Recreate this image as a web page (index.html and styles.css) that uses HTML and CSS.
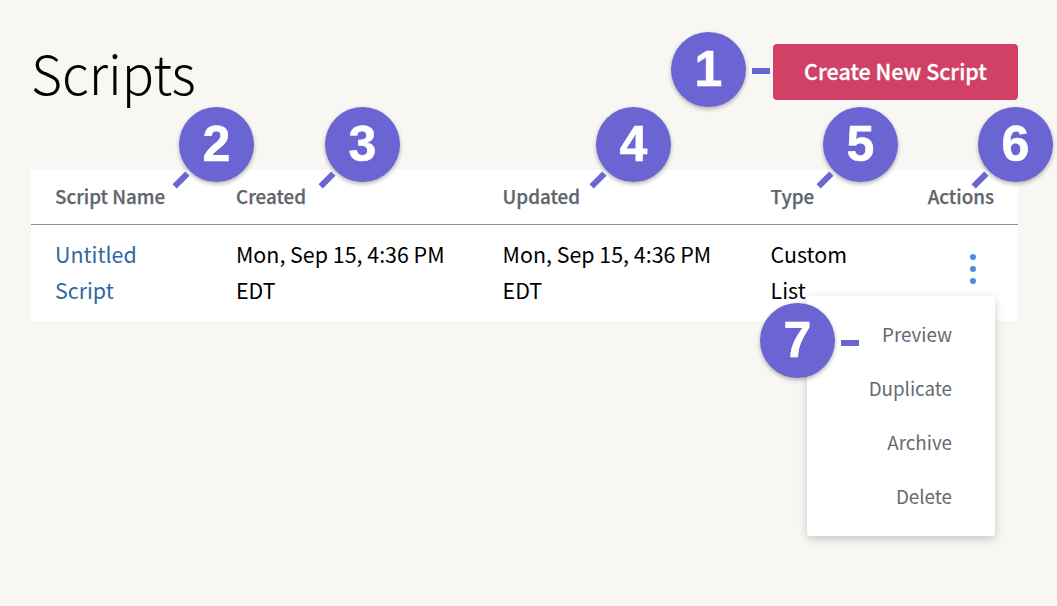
FILE: index.html
```html
<!DOCTYPE html>
<html>
<head>
    <meta charset="utf-8">
    <title>Scripts</title>
    <link rel="stylesheet" href="styles.css">
</head>
<body>
<div class="page">
    <div class="page_head">
        <h1 class="page_title">Scripts</h1>
        <button class="create_btn">Create New Script</button>
    </div>

    <table class="scripts">
        <colgroup>
            <col class="col_name">
            <col class="col_created">
            <col class="col_updated">
            <col class="col_type">
            <col>
        </colgroup>
        <thead>
            <tr>
                <th>Script Name</th>
                <th>Created</th>
                <th>Updated</th>
                <th>Type</th>
                <th class="right">Actions</th>
            </tr>
        </thead>
        <tbody>
            <tr>
                <td><a class="script_link" href="#">Untitled Script</a></td>
                <td>Mon, Sep 15, 4:36 PM EDT</td>
                <td>Mon, Sep 15, 4:36 PM EDT</td>
                <td>Custom List</td>
                <td class="right">
                    <svg class="kebab" width="6" height="30" viewBox="0 0 6 30"><circle cx="3" cy="3" r="3"/><circle cx="3" cy="15" r="3"/><circle cx="3" cy="27" r="3"/></svg>
                </td>
            </tr>
        </tbody>
    </table>
</div>

<div class="menu">
    <a href="#">Preview</a>
    <a href="#">Duplicate</a>
    <a href="#">Archive</a>
    <a href="#">Delete</a>
</div>

<!-- numbered callouts drawn over the page -->
<div class="badge b1">1</div>
<div class="badge b2">2</div>
<div class="badge b3">3</div>
<div class="badge b4">4</div>
<div class="badge b5">5</div>
<div class="badge b6">6</div>
<div class="badge b7">7</div>

<div class="tick flat t1"></div>
<div class="tick flat t7"></div>
<div class="tick slant t2"></div>
<div class="tick slant t3"></div>
<div class="tick slant t4"></div>
<div class="tick slant t5"></div>
<div class="tick slant t6"></div>
</body>
</html>
```

FILE: styles.css
```css
html, body {
    margin:0;
    height:606px;
    overflow:hidden;
}

body {
    position:relative;
    background:#f8f7f4;
    font-family:"Noto Sans CJK JP", "Noto Sans", sans-serif;
    color:#000;
}

.page {
    padding:44px 39px 0 31px;
}

.page_head {
    display:flex;
    justify-content:space-between;
    align-items:flex-start;
    height:126px;
}

.page_title {
    margin:0;
    font-size:53.5px;
    font-weight:300;
    line-height:56px;
    color:#000;
}

.create_btn {
    width:245px;
    height:56px;
    padding:0 0 3px;
    border:0;
    border-radius:4px;
    background:#d14065;
    color:#fff;
    font-family:inherit;
    font-size:21.5px;
    font-weight:500;
    -webkit-text-stroke:.3px #fff;
}

.scripts {
    width:987px;
    table-layout:fixed;
    border-collapse:collapse;
    background:#fff;
}

.col_name { width:181px; }
.col_created { width:266.6px; }
.col_updated { width:268px; }
.col_type { width:156px; }

.scripts th {
    height:54px;
    padding:0 24px 2px;
    box-sizing:border-box;
    border-bottom:1px solid #8a94a0;
    text-align:left;
    font-size:18.8px;
    font-weight:500;
    color:#60656b;
    -webkit-text-stroke:.25px #60656b;
}

.scripts td {
    padding:11px 24px 13px;
    font-size:21.4px;
    line-height:36px;
    vertical-align:top;
}

.scripts .right {
    text-align:right;
}

.script_link {
    color:#2f689f;
    text-decoration:none;
}

.kebab {
    display:block;
    margin:18px 18px 0 auto;
    fill:#4a8ee0;
}

.menu {
    position:absolute;
    left:807px;
    top:296px;
    width:188px;
    height:240px;
    padding-top:11px;
    box-sizing:border-box;
    background:#fff;
    border-radius:3px;
    box-shadow:0 3px 10px rgba(0,0,0,.2);
}

.menu a {
    display:block;
    height:54px;
    padding-right:43px;
    text-align:right;
    font-size:18.8px;
    line-height:54px;
    color:#646b72;
    text-decoration:none;
}

.badge {
    position:absolute;
    width:75px;
    height:75px;
    border-radius:50%;
    background:#6a65d2;
    box-shadow:0 2px 4px rgba(0,0,0,.3);
    color:#fff;
    font-family:"Liberation Sans", sans-serif;
    font-weight:700;
    font-size:50px;
    line-height:75px;
    text-align:center;
    -webkit-text-stroke:.6px #fff;
}

.b1 { left:671px; top:32px; }
.b2 { left:179px; top:107px; }
.b3 { left:325px; top:107px; }
.b4 { left:596px; top:107px; }
.b5 { left:823px; top:107px; }
.b6 { left:978px; top:107px; }
.b7 { left:760px; top:303px; }

.tick {
    position:absolute;
    width:18px;
    height:6px;
    background:#6a65d2;
}

.slant {
    transform:rotate(-45deg);
}

.t1 { left:752px; top:68px; }
.t7 { left:841px; top:340px; }
.t2 { left:172px; top:177px; }
.t3 { left:318px; top:177px; }
.t4 { left:589px; top:177px; }
.t5 { left:816px; top:177px; }
.t6 { left:971px; top:177px; }
```
